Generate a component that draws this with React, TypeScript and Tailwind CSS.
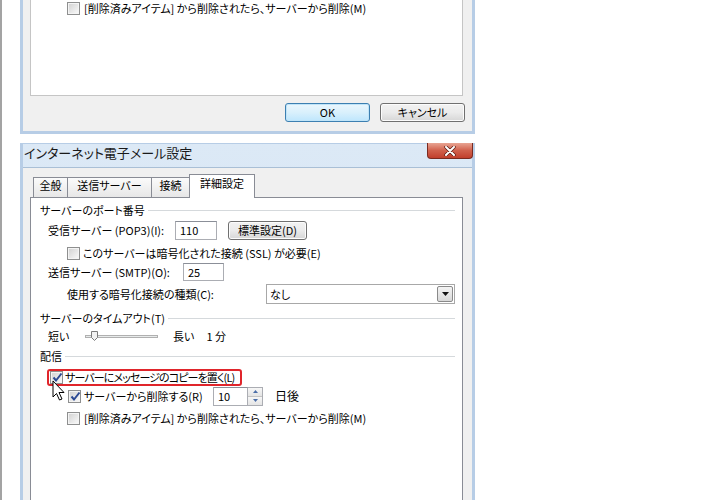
import React from 'react'

const font = "font-['Noto_Sans_CJK_JP',sans-serif] [font-feature-settings:'palt']"

function Check({ checked }: { checked?: boolean }) {
  return (
    <span className="relative inline-flex h-[13px] w-[13px] shrink-0 items-center justify-center border border-[#8e8f8f] bg-[#f4f4f4]">
      <span className="h-[9px] w-[9px] bg-gradient-to-br from-[#d4d4d4] to-[#f7f7f7]" />
      {checked && (
        <svg className="absolute left-[1px] top-[0px]" width="11" height="11" viewBox="0 0 11 11">
          <path d="M1.5 5.5 L4 8.5 L9.5 1.5" fill="none" stroke="#2c4a94" strokeWidth="2" />
        </svg>
      )}
    </span>
  )
}

function WinButton({ children, primary, className }: { children: React.ReactNode; primary?: boolean; className?: string }) {
  return (
    <div
      className={
        'flex items-center justify-center rounded-[3px] border text-[11px] text-black ' +
        (primary
          ? 'border-[#3c7fb1] bg-gradient-to-b from-[#eaf6fd] via-[#d9f0fc] to-[#bee6fd] shadow-[inset_0_0_0_1px_#c0e4f8] '
          : 'border-[#707070] bg-gradient-to-b from-[#f2f2f2] via-[#ebebeb] to-[#d6d6d6] shadow-[inset_0_0_0_1px_#fcfcfc] ') +
        (className ?? '')
      }
    >
      {children}
    </div>
  )
}

function TextBox({ value, className }: { value: string; className?: string }) {
  return (
    <div className={'flex items-center border border-[#abadb3] border-t-[#8b8f98] bg-white pl-[4px] ' + (className ?? '')}>
      {value}
    </div>
  )
}

function GroupHeader({ label, className }: { label: string; className?: string }) {
  return (
    <div className={'flex items-center pl-[9px] pr-[7px] ' + (className ?? '')}>
      <span>{label}</span>
      <div className="ml-[3px] h-px flex-1 bg-[#d5d9dc]" />
    </div>
  )
}

function Tab({ label, w, active }: { label: string; w: string; active?: boolean }) {
  return (
    <div
      className={
        '-ml-px flex items-start justify-center border border-b-0 border-[#898c95] ' +
        (active
          ? 'relative z-10 -mb-px h-[24px] bg-white pt-[3px] '
          : 'h-[20px] bg-gradient-to-b from-[#fbfbfb] to-[#e7e7e7] pt-[2px] ') +
        w
      }
    >
      {label}
    </div>
  )
}

export default function App() {
  return (
    <div className={'relative h-[500px] w-[720px] overflow-hidden whitespace-nowrap border-l-2 border-[#a3a3a3] bg-white text-[11px] leading-none text-black ' + font}>
      {/* previous dialog, bottom part */}
      <div className="ml-[18px] w-[455px] border-x-[3px] border-b-[3px] border-[#b7cde6] bg-[#f0f0f0]">
        <div className="ml-[7px] mr-[9px] h-[96px] border-x border-b border-[#c5c5c5] bg-white">
          <div className="flex h-[16px] items-center pl-[36px]">
            <Check />
            <span className="ml-[4px]">[削除済みアイテム] から削除されたら、サーバーから削除(M)</span>
          </div>
        </div>
        <div className="flex justify-end gap-[10px] pb-[9px] pr-[7px] pt-[7px]">
          <WinButton primary className="h-[19px] w-[85px]">OK</WinButton>
          <WinButton className="h-[19px] w-[85px]">キャンセル</WinButton>
        </div>
      </div>

      {/* インターネット電子メール設定 */}
      <div className="ml-[18px] mt-[9px] w-[455px] border-x-[3px] border-t border-[#b7cde6] bg-gradient-to-b from-[#dce9f6] to-[#cfe0f1]">
        <div className="flex h-[23px] items-start justify-between">
          <span className="pl-[1px] pt-[2px] text-[13px] text-[#1a1a1a]">インターネット電子メール設定</span>
          <div className="-mt-px mr-[-1px] flex h-[16px] w-[46px] items-center justify-center rounded-b-[4px] border border-t-0 border-[#7a2a20] bg-gradient-to-b from-[#e8a493] via-[#d0604c] to-[#c13e2c]">
            <svg width="12" height="10" viewBox="0 0 12 10">
              <path d="M2 1 L10 9 M10 1 L2 9" stroke="#5a1a12" strokeWidth="3.4" strokeLinecap="round" />
              <path d="M2 1 L10 9 M10 1 L2 9" stroke="#ffffff" strokeWidth="2" strokeLinecap="round" />
            </svg>
          </div>
        </div>
        <div className="border-t border-[#a9bfd6] bg-[#f0f0f0] pt-[6px]">
          <div className="ml-[7px] mr-[9px]">
            <div className="flex h-[23px] items-end pl-[4px]">
              <Tab label="全般" w="w-[35px]" />
              <Tab label="送信サーバー" w="w-[85px]" />
              <Tab label="接続" w="w-[39px]" />
              <Tab label="詳細設定" w="w-[66px]" active />
            </div>
            <div className="h-[320px] border border-[#898c95] bg-white">
              <GroupHeader label="サーバーのポート番号" className="mt-[5px] h-[14px]" />
              <div className="flex h-[26px] items-center pl-[17px]">
                <span className="w-[127px]">受信サーバー (POP3)(I):</span>
                <TextBox value="110" className="h-[19px] w-[42px]" />
                <WinButton className="ml-[11px] h-[19px] w-[79px]">標準設定(D)</WinButton>
              </div>
              <div className="flex h-[20px] items-center pl-[36px]">
                <Check />
                <span className="ml-[3px]">このサーバーは暗号化された接続 (SSL) が必要(E)</span>
              </div>
              <div className="flex h-[18px] items-center pl-[17px]">
                <span className="w-[135px]">送信サーバー (SMTP)(O):</span>
                <TextBox value="25" className="h-[18px] w-[41px]" />
              </div>
              <div className="flex h-[26px] items-center pl-[36px]">
                <span className="w-[199px]">使用する暗号化接続の種類(C):</span>
                <div className="flex h-[20px] w-[189px] items-center justify-between border border-[#a8a8a8] bg-white pl-[3px] pr-[1px]">
                  <span>なし</span>
                  <div className="flex h-[16px] w-[16px] items-center justify-center rounded-[2px] border border-[#8a8a8a] bg-gradient-to-b from-[#f4f4f4] to-[#d8d8d8]">
                    <svg width="7" height="4" viewBox="0 0 7 4">
                      <path d="M0 0 H7 L3.5 4 Z" fill="#111" />
                    </svg>
                  </div>
                </div>
              </div>
              <GroupHeader label="サーバーのタイムアウト(T)" className="h-[23px]" />
              <div className="flex h-[12px] items-center pl-[17px]">
                <span className="w-[37px]">短い</span>
                <div className="relative h-[10px] w-[73px]">
                  <div className="absolute left-0 right-0 top-[4px] h-[3px] border border-[#b0b0b0] bg-[#e7eaea]" />
                  <svg className="absolute left-[6px] top-0" width="7" height="10" viewBox="0 0 7 10">
                    <path d="M0.5 0.5 H6.5 V6.5 L3.5 9.5 L0.5 6.5 Z" fill="#f1f1f1" stroke="#7b7b7b" />
                  </svg>
                </div>
                <span className="ml-[15px]">長い</span>
                <span className="ml-[12px]">1 分</span>
              </div>
              <GroupHeader label="配信" className="h-[28px]" />
              <div className="relative">
                <div className="relative flex h-[14px] items-center pl-[19px]">
                  <div className="absolute left-[16px] top-[-1px] h-[17px] w-[195px] rounded-[3px] border-2 border-[#e0252b]" />
                  <Check checked />
                  <span className="ml-[2px] tracking-[-0.9px]">サーバーにメッセージのコピーを置く(L)</span>
                </div>
                <div className="flex h-[24px] items-center pl-[37px]">
                  <Check checked />
                  <span className="ml-[3px] w-[129px]">サーバーから削除する(R)</span>
                  <TextBox value="10" className="h-[19px] w-[35px]" />
                  <div className="flex h-[19px] w-[15px] flex-col border border-l-0 border-[#abadb3]">
                    <div className="flex flex-1 items-center justify-center border-b border-[#c4c4c4] bg-gradient-to-b from-[#f7f7f7] to-[#e4e4e4]">
                      <svg width="5" height="3" viewBox="0 0 5 3"><path d="M0 3 L2.5 0 L5 3 Z" fill="#4b6ea8" /></svg>
                    </div>
                    <div className="flex flex-1 items-center justify-center bg-gradient-to-b from-[#f7f7f7] to-[#e4e4e4]">
                      <svg width="5" height="3" viewBox="0 0 5 3"><path d="M0 0 L5 0 L2.5 3 Z" fill="#4b6ea8" /></svg>
                    </div>
                  </div>
                  <span className="ml-[12px] text-[12px]">日後</span>
                </div>
                <div className="flex h-[20px] items-center pl-[36px]">
                  <Check />
                  <span className="ml-[4px]">[削除済みアイテム] から削除されたら、サーバーから削除(M)</span>
                </div>
                <svg className="absolute left-[21px] top-[10px]" width="14" height="22" viewBox="0 0 14 22">
                  <path d="M1 1 V17 L4.5 13.5 L7.5 20 L10 19 L7 12.5 H12 Z" fill="#ffffff" stroke="#000000" strokeWidth="1" strokeLinejoin="round" />
                </svg>
              </div>
            </div>
          </div>
        </div>
      </div>
    </div>
  )
}
